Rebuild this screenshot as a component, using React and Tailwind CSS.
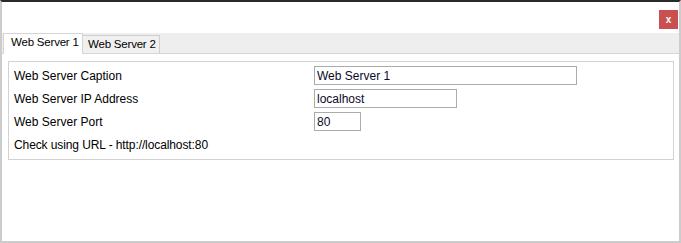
import { useState } from "react"

const rows = [
    { label: "Web Server Caption", value: "Web Server 1", width: "w-[263px]" },
    { label: "Web Server IP Address", value: "localhost", width: "w-[143px]" },
    { label: "Web Server Port", value: "80", width: "w-[47px]" },
]

export default function App() {
    const [tab, setTab] = useState(0)

    return (
        <div className="w-[681px] h-[243px] bg-white border-t-2 border-t-[#2a2a2a] border-x-2 border-b-2 border-x-[#cccccc] border-b-[#cccccc] font-['Liberation_Sans',Arial,sans-serif] text-[12px] text-black flex flex-col">
            {/* title row with close button */}
            <div className="h-[31px] flex justify-end items-start pt-[8px] pr-px">
                <button className="w-[19px] h-[19px] bg-[#c9504f] text-white text-[10px] font-bold leading-none flex items-center justify-center">
                    x
                </button>
            </div>

            {/* tab strip */}
            <div className="h-[21px] bg-[#eeeeee] border-b border-[#d6d6d6] flex items-end pl-px">
                <button
                    onClick={() => setTab(0)}
                    className={
                        tab === 0
                            ? "h-[21px] -mb-px w-[80px] bg-white border-x border-t border-[#d4d4d4] pl-[7px] pb-[2px] flex items-center whitespace-nowrap text-[11.5px] tracking-[-0.2px] leading-none"
                            : "h-[18px] w-[80px] bg-[#f0f0f0] border-x border-t border-[#cfcfcf] pl-[7px] flex items-center whitespace-nowrap text-[11.5px] tracking-[-0.2px] leading-none"
                    }
                >
                    Web Server 1
                </button>
                <button
                    onClick={() => setTab(1)}
                    className={
                        tab === 1
                            ? "h-[21px] -mb-px w-[77px] bg-white border-x border-t border-[#d4d4d4] pl-[5px] pb-[2px] flex items-center whitespace-nowrap text-[11.5px] tracking-[-0.2px] leading-none"
                            : "h-[18px] w-[77px] bg-[#f0f0f0] border-r border-t border-[#cfcfcf] pl-[5px] flex items-center whitespace-nowrap text-[11.5px] tracking-[-0.2px] leading-none"
                    }
                >
                    Web Server 2
                </button>
            </div>

            {/* tab content */}
            <div className="flex-1 pt-[7px] pl-[6px] pr-[5px]">
                <div className="border border-[#d2d2d2] pt-[4px] pb-[5px] pl-[5px] flex flex-col gap-[4px]">
                    {rows.map((r) => (
                        <div key={r.label} className="grid grid-cols-[300px_1fr] items-center h-[19px]">
                            <span>{r.label}</span>
                            <input
                                defaultValue={r.value}
                                className={`${r.width} h-[19px] border border-[#ababab] px-[2px] text-[12px] text-[#0a0a2a] outline-none`}
                            />
                        </div>
                    ))}
                    <div className="h-[19px] flex items-center tracking-[-0.1px]">
                        Check using URL - http://localhost:80
                    </div>
                </div>
            </div>
        </div>
    )
}
